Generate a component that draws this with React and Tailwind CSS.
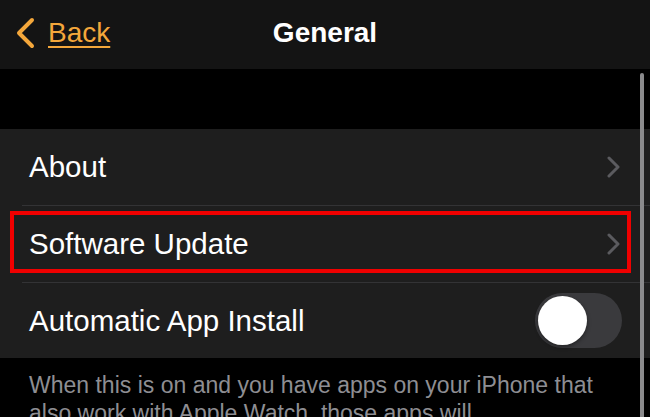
import React from "react";

function Chevron() {
  return (
    <svg width="14" height="22" viewBox="0 0 14 22" fill="none">
      <polyline points="2,2 11,11 2,20" stroke="#5b5b5f" strokeWidth="3" strokeLinecap="round" strokeLinejoin="round" />
    </svg>
  );
}

export default function App() {
  return (
    <div className="relative w-[650px] h-[417px] overflow-hidden bg-black font-['Liberation_Sans',Arial,sans-serif]">
      <header className="h-[69px] bg-[#141414] grid grid-cols-[1fr_auto_1fr] items-center pb-[4px]">
        <div className="flex items-center pl-[15px] gap-[13px] text-[#f4a73b]">
          <svg width="20" height="32" viewBox="0 0 20 32" fill="none">
            <polyline points="17,3 4,16 17,29" stroke="#f4a73b" strokeWidth="4" strokeLinecap="round" strokeLinejoin="round" />
          </svg>
          <span className="text-[28px] leading-[32px] underline underline-offset-[4px] decoration-[2px]">Back</span>
        </div>
        <div className="text-white text-[28px] font-bold leading-[32px]">General</div>
        <div />
      </header>
      <div className="h-[60px] bg-black" />
      <div className="bg-[#1e1e1e]">
        <div className="h-[76px] flex items-center justify-between pl-[29px] pr-[29px]">
          <span className="text-white text-[29.5px] leading-none">About</span>
          <Chevron />
        </div>
        <div className="ml-[22px] h-px bg-[#333335]" />
        <div className="h-[76px] flex items-center justify-between pl-[29px] pr-[29px]">
          <span className="text-white text-[29.5px] leading-none">Software Update</span>
          <Chevron />
        </div>
        <div className="ml-[22px] h-px bg-[#333335]" />
        <div className="h-[75px] flex items-center justify-between pl-[29px] pr-[28px]">
          <span className="text-white text-[29.5px] leading-none">Automatic App Install</span>
          <div className="w-[87px] h-[55px] rounded-full bg-[#3a3a3d] flex items-center pl-[3px]">
            <div className="w-[49px] h-[49px] rounded-full bg-white shadow-[0_2px_4px_rgba(0,0,0,0.4)]" />
          </div>
        </div>
      </div>
      <div className="pl-[29px] pt-[13px] w-[608px] text-[#8e8e93] text-[23px] leading-[28px]">
        When this is on and you have apps on your iPhone that also work with Apple Watch, those apps will automatically install on your watch.
      </div>
      <div className="absolute left-[640px] top-[73px] w-[4px] h-[360px] rounded-full bg-[#8a8a8c]" />
      <div className="absolute left-[10px] top-[211px] w-[621px] h-[62px] border-[4px] border-[#f00000]" />
    </div>
  );
}
